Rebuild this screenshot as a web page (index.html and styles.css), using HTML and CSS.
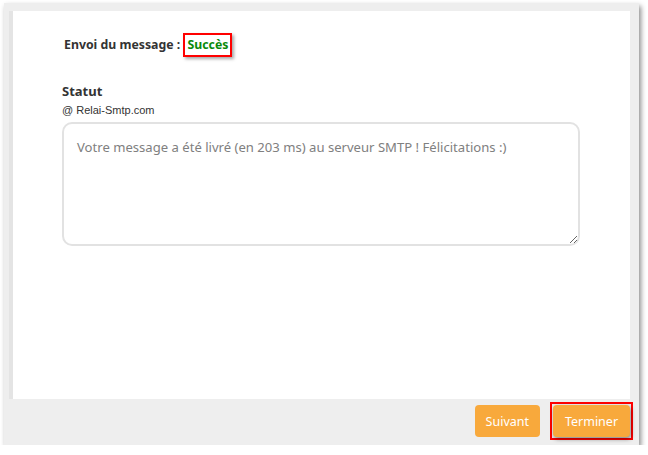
FILE: index.html
```html
<!DOCTYPE html>
<html lang="fr">
<head>
  <meta charset="UTF-8">
  <title>Envoi du message</title>
  <link rel="stylesheet" href="styles.css">
</head>
<body>

  <div class="frame">
    <div class="content">
      <h1 class="title">Envoi du message : <span class="success">Succès</span></h1>

      <h3 class="label">Statut</h3>
      <p class="server">@ Relai-Smtp.com</p>
      <textarea class="status" readonly>Votre message a été livré (en 203 ms) au serveur SMTP ! Félicitations :)</textarea>
    </div>

    <div class="footer">
      <button class="btn">Suivant</button>
      <span class="mark">
        <button class="btn btn-done">Terminer</button>
      </span>
    </div>
  </div>

</body>
</html>
```

FILE: styles.css
```css
body {
  margin: 0;
  background-color: white;
  font-family: "Noto Sans", "Open Sans", sans-serif;
  color: #333;
}
.frame {
  margin: 3px 0 0 4px;
  width: 635px;
  height: 442px;
  box-sizing: border-box;
  padding: 8px 9px 0 5px;
  background-color: #eeeeee;
  box-shadow: 2px 3px 5px rgba(0, 0, 0, 0.45);
  display: flex;
  flex-direction: column;
}
.content {
  height: 388px;
  box-sizing: border-box;
  background-color: white;
  border-left: 4px solid #e4e4e4;
  padding: 22px 0 0 49px;
}
.title {
  margin: 0 0 0 2px;
  font-size: 12.3px;
  font-weight: bold;
  line-height: 24px;
  color: #333;
}
.success {
  display: inline-block;
  color: #0a8a0a;
  border: 2px solid red;
  padding: 0 2px;
  line-height: 20px;
  box-shadow: 2px 2px 3px rgba(0, 0, 0, 0.35);
}
.label {
  margin: 25px 0 0;
  font-size: 13px;
  font-weight: bold;
  line-height: 18px;
}
.server {
  margin: 3px 0 0;
  font-family: "Liberation Sans", Arial, sans-serif;
  font-size: 11px;
  line-height: 14px;
}
.status {
  display: block;
  margin-top: 5px;
  width: 518px;
  height: 124px;
  box-sizing: border-box;
  padding: 13px 13px;
  border: 2px solid #e2e2e2;
  border-radius: 10px;
  font-family: "Noto Sans", sans-serif;
  font-size: 13.1px;
  line-height: 20px;
  color: #808080;
  outline: none;
}
.footer {
  flex: 1;
  display: flex;
  justify-content: flex-end;
  align-items: flex-start;
  gap: 10px;
  padding-top: 3px;
  padding-right: 0;
}
.btn {
  height: 32px;
  margin-top: 3px;
  padding: 0 11px;
  font-family: "Noto Sans", sans-serif;
  font-size: 12.5px;
  color: white;
  background-color: #f8a93c;
  border: none;
  border-radius: 4px;
  cursor: pointer;
}
.mark {
  display: flex;
  padding: 1px;
  border: 2px solid red;
  margin-right: -3px;
}
.btn-done {
  width: 77px;
  margin-top: 0;
  box-shadow: 1px 2px 4px rgba(0, 0, 0, 0.45);
}
```
